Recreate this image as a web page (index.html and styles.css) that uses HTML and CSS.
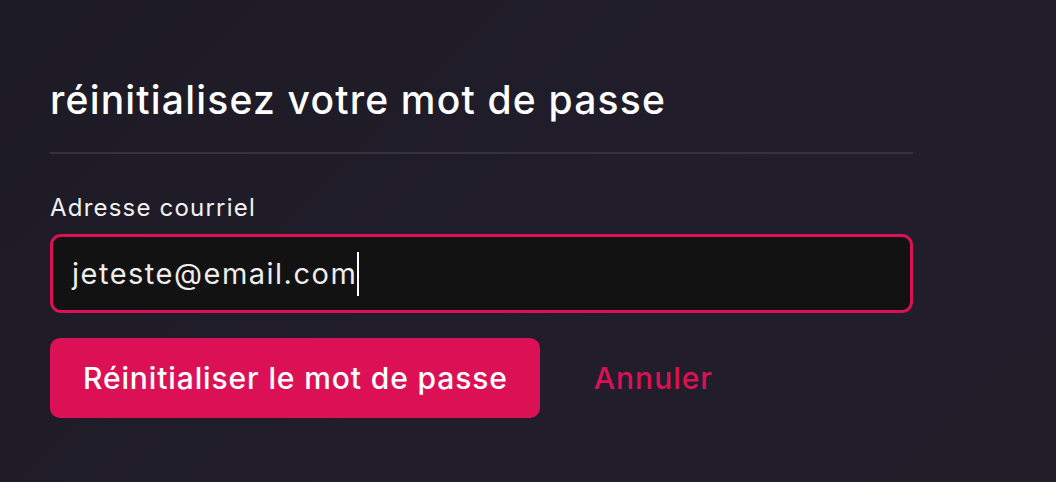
FILE: index.html
```html
<!DOCTYPE html>
<html lang="fr">
<head>
<meta charset="utf-8">
<title>Réinitialisez votre mot de passe</title>
<link rel="stylesheet" href="styles.css">
</head>
<body>
<main class="page">
  <section class="card">
    <h1 class="title">réinitialisez votre mot de passe</h1>
    <hr class="divider">
    <form class="form">
      <label class="label" for="email">Adresse courriel</label>
      <div class="input" id="email"><span class="value">jeteste@email.com</span><span class="caret"></span></div>
      <div class="actions">
        <button type="button" class="btn-primary">Réinitialiser le mot de passe</button>
        <a class="btn-link" href="#">Annuler</a>
      </div>
    </form>
  </section>
</main>
</body>
</html>
```
FILE: styles.css
```css
* { box-sizing: border-box; }
html, body { margin: 0; height: 100%; }
body {
  background: linear-gradient(135deg, #1d1b26 0%, #211d2b 60%, #231d2a 100%);
  font-family: Inter, "Noto Sans", sans-serif;
  color: #ffffff;
}
.page {
  padding: 76px 0 0 50px;
}
.card {
  width: 863px;
}
.title {
  margin: 0;
  font-size: 39px;
  font-weight: 500;
  line-height: 48px;
  letter-spacing: 1.2px;
}
.divider {
  margin: 28px 0 0;
  border: 0;
  height: 2px;
  background: #35323c;
}
.form {
  display: flex;
  flex-direction: column;
  padding-top: 40px;
}
.label {
  font-size: 24px;
  line-height: 28px;
  color: #f2f2f2;
  letter-spacing: 1.2px;
  margin-bottom: 12px;
}
.input {
  height: 79px;
  border: 3px solid #dc1155;
  border-radius: 11px;
  background: #121212;
  display: flex;
  align-items: center;
  padding-left: 19px;
  font-size: 29px;
  letter-spacing: 1.5px;
  color: #ededed;
}
.caret {
  display: inline-block;
  width: 2px;
  height: 44px;
  background: #ffffff;
}
.actions {
  display: flex;
  align-items: center;
  margin-top: 25px;
}
.btn-primary {
  height: 80px;
  padding: 0 32px 0 33px;
  border: 0;
  border-radius: 10px;
  background: #dc1155;
  color: #ffffff;
  font-family: inherit;
  font-size: 30px;
  font-weight: 500;
  letter-spacing: 0.88px;
}
.btn-link {
  margin-left: 54px;
  color: #dc1155;
  font-size: 30px;
  font-weight: 500;
  letter-spacing: 1px;
  text-decoration: none;
}
```
